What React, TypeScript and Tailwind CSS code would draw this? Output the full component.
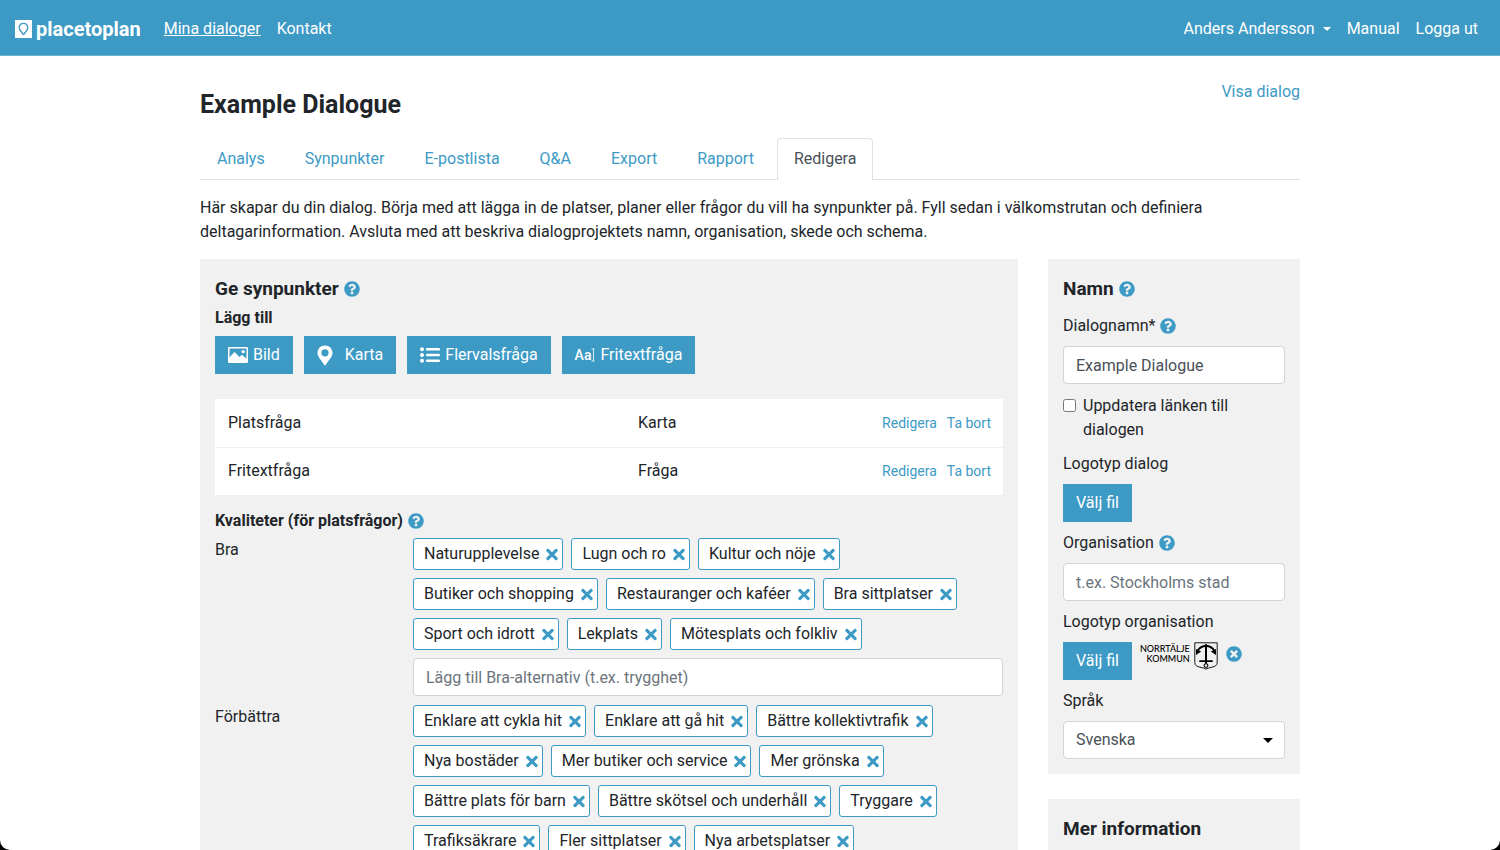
import React from "react";
import { FaQuestionCircle, FaTimes, FaTimesCircle } from "react-icons/fa";

const tabs = [
  "Analys",
  "Synpunkter",
  "E-postlista",
  "Q&A",
  "Export",
  "Rapport",
  "Redigera",
];

const questions = [
  { name: "Platsfråga", type: "Karta" },
  { name: "Fritextfråga", type: "Fråga" },
];

const good = [
  "Naturupplevelse",
  "Lugn och ro",
  "Kultur och nöje",
  "Butiker och shopping",
  "Restauranger och kaféer",
  "Bra sittplatser",
  "Sport och idrott",
  "Lekplats",
  "Mötesplats och folkliv",
];

const improve = [
  "Enklare att cykla hit",
  "Enklare att gå hit",
  "Bättre kollektivtrafik",
  "Nya bostäder",
  "Mer butiker och service",
  "Mer grönska",
  "Bättre plats för barn",
  "Bättre skötsel och underhåll",
  "Tryggare",
  "Trafiksäkrare",
  "Fler sittplatser",
  "Nya arbetsplatser",
];

function ImageIcon() {
  return (
    <svg width="20" height="16" viewBox="0 0 20 16" fill="none">
      <rect x="0.75" y="0.75" width="18.5" height="14.5" rx="0.5" stroke="white" strokeWidth="1.5" />
      <path d="M1 15V11L6.5 5L11.5 10L14 7.800L19 12V15Z" fill="white" />
      <circle cx="15.200" cy="4.600" r="1.700" fill="white" />
    </svg>
  );
}

function PinIcon() {
  return (
    <svg width="16" height="21" viewBox="0 0 16 21">
      <path
        fill="white"
        fillRule="evenodd"
        d="M8 0.500C3.700 0.500 0.500 3.700 0.500 7.800C0.500 12.500 5 15.500 7 19.800Q8 21.200 9 19.800C11 15.500 15.500 12.500 15.500 7.800C15.500 3.700 12.300 0.500 8 0.500ZM8 4.200A3.600 3.600 0 1 1 8 11.400A3.600 3.600 0 1 1 8 4.200Z"
      />
    </svg>
  );
}

function ListIcon() {
  return (
    <svg width="20" height="16" viewBox="0 0 20 16" fill="white">
      <circle cx="2" cy="2.200" r="2" />
      <circle cx="2" cy="8" r="2" />
      <circle cx="2" cy="13.800" r="2" />
      <rect x="6" y="1" width="14" height="2.600" rx="1.200" />
      <rect x="6" y="6.700" width="14" height="2.600" rx="1.200" />
      <rect x="6" y="12.400" width="14" height="2.600" rx="1.200" />
    </svg>
  );
}

function CursorIcon() {
  return (
    <svg width="4" height="14" viewBox="0 0 4 14" fill="none">
      <path d="M0.500 1H3.500M0.500 13H3.500M2.500 1V13" stroke="white" strokeOpacity="0.8" />
    </svg>
  );
}

function Shield() {
  return (
    <svg width="24" height="28" viewBox="0 0 24 28" fill="none" stroke="black">
      <path d="M0.800 0.800H23.200V20.500C23.200 23.500 21 24.500 18 25.200C15 25.900 13 26.300 12 27.300C11 26.300 9 25.900 6 25.200C3 24.500 0.800 23.500 0.800 20.500Z" strokeWidth="0.9" />
      <path d="M3.500 9C5.500 5.500 9 4 12 4C15 4 18.500 5.500 20.500 9" strokeWidth="1.800" />
      <path d="M2 7L2 13L7.200 9.500ZM22 7L22 13L16.800 9.500ZM12 1.800L8.500 5H15.500Z" fill="black" stroke="none" />
      <path d="M12 3.500V21.500" strokeWidth="2" />
      <path d="M6 19.200H18" strokeWidth="1.800" strokeLinecap="round" />
      <circle cx="12" cy="23.600" r="1.900" strokeWidth="1.100" />
    </svg>
  );
}

function Help() {
  return (
    <button type="button" aria-label="Hjälp" className="text-[#3d9ac5]">
      <FaQuestionCircle size={16} />
    </button>
  );
}

function AddButton({ icon, label }: { icon: React.ReactNode; label: string }) {
  return (
    <button type="button" className="flex h-[38px] items-center gap-[5px] bg-[#3d9ac5] px-[13px] text-white">
      {icon}
      <span>{label}</span>
    </button>
  );
}

function TagGroup({
  id,
  label,
  tags,
  placeholder,
}: {
  id: string;
  label: string;
  tags: string[];
  placeholder: string;
}) {
  return (
    <div className="flex">
      <label htmlFor={id} className="w-[198px] shrink-0">
        {label}
      </label>
      <div className="flex flex-1 flex-wrap gap-2">
        {tags.map((tag) => (
          <span
            key={tag}
            className="flex h-8 items-center gap-[7px] rounded-[3px] border border-[#3d9ac5] bg-white pr-1 pl-[10px]"
          >
            {tag}
            <button type="button" aria-label={`Ta bort ${tag}`} className="text-[#3d9ac5]">
              <FaTimes className="h-[17px] w-3" />
            </button>
          </span>
        ))}
        <input
          id={id}
          placeholder={placeholder}
          className="h-[38px] w-full rounded-[4px] border border-[#ced4da] bg-white px-3 placeholder:text-[#6c757d]"
        />
      </div>
    </div>
  );
}

function Header() {
  return (
    <header className="flex h-14 items-center justify-between border-b border-[#6db3d4] bg-[#3d9ac5] pt-[2px] pr-[22px] pl-[15px] text-white">
      <div className="flex items-center">
        <a href="#" className="mr-[23px] flex items-center gap-1 text-[20px] font-bold">
          <svg width="17" height="18" viewBox="0 0 17 18">
            <rect width="17" height="18" fill="white" />
            <path
              d="M8.500 3.300C5.900 3.300 4.200 5.200 4.200 7.600C4.200 10.500 6.800 11.500 7.900 14.200Q8.500 15.100 9.100 14.200C10.200 11.500 12.800 10.500 12.800 7.600C12.800 5.200 11.100 3.300 8.500 3.300Z"
              fill="none"
              stroke="#3d9ac5"
              strokeWidth="1.300"
            />
          </svg>
          placetoplan
        </a>
        <nav className="flex gap-4">
          <a href="#" className="underline">Mina dialoger</a>
          <a href="#">Kontakt</a>
        </nav>
      </div>
      <nav className="flex gap-4">
        <button type="button" className="flex items-center gap-2">
          Anders Andersson
          <svg width="8" height="4" viewBox="0 0 8 4" fill="white">
            <path d="M0 0H8L4 4Z" />
          </svg>
        </button>
        <a href="#">Manual</a>
        <a href="#">Logga ut</a>
      </nav>
    </header>
  );
}

function Editor() {
  return (
    <section className="min-w-0 flex-1 bg-[#f1f1f1] px-[15px] pt-[15px] pb-6">
      <h2 className="flex items-center gap-[5px] text-[19px] leading-[30px] font-bold">
        Ge synpunkter <Help />
      </h2>
      <h3 className="mt-[2px] font-bold">Lägg till</h3>
      <div className="mt-[6px] flex gap-[11px]">
        <AddButton icon={<ImageIcon />} label="Bild" />
        <AddButton icon={<span className="mr-[7px]"><PinIcon /></span>} label="Karta" />
        <AddButton icon={<ListIcon />} label="Flervalsfråga" />
        <AddButton
          icon={
            <span className="flex items-center text-sm font-medium">
              Aa
              <CursorIcon />
            </span>
          }
          label="Fritextfråga"
        />
      </div>
      <table className="mt-[25px] w-full table-fixed bg-white text-left">
        <tbody>
          {questions.map((q) => (
            <tr key={q.name} className="h-12 border-b border-[#f1f1f1] last:border-0">
              <td className="w-[423px] pl-[13px]">{q.name}</td>
              <td>{q.type}</td>
              <td className="pr-3 text-right text-sm text-[#3d9ac5]">
                <a href="#">Redigera</a>
                <a href="#" className="ml-[10px]">Ta bort</a>
              </td>
            </tr>
          ))}
        </tbody>
      </table>
      <h3 className="mt-[14px] mb-[5px] flex items-center gap-[5px] font-bold">
        Kvaliteter (för platsfrågor) <Help />
      </h3>
      <div className="flex flex-col gap-[9px]">
        <TagGroup id="bra" label="Bra" tags={good} placeholder="Lägg till Bra-alternativ (t.ex. trygghet)" />
        <TagGroup id="forbattra" label="Förbättra" tags={improve} placeholder="Lägg till Förbättra-alternativ" />
      </div>
    </section>
  );
}

function Sidebar() {
  return (
    <aside className="flex w-[252px] shrink-0 flex-col gap-[25px]">
      <section className="bg-[#f1f1f1] p-[15px]">
        <h2 className="mb-[10px] flex items-center gap-[5px] text-[19px] leading-[30px] font-bold">
          Namn <Help />
        </h2>
        <div className="mb-2 flex items-center gap-[5px]">
          <label htmlFor="name">Dialognamn*</label>
          <Help />
        </div>
        <input
          id="name"
          defaultValue="Example Dialogue"
          className="h-[38px] w-full rounded-[4px] border border-[#ced4da] bg-white px-3 text-[#495057]"
        />
        <div className="my-[10px] flex items-start gap-[7px]">
          <input id="update" type="checkbox" className="mt-[5px] size-[13px] shrink-0" />
          <label htmlFor="update">Uppdatera länken till dialogen</label>
        </div>
        <div className="flex flex-col gap-[9px]">
          <div>
            <p className="mb-2">Logotyp dialog</p>
            <button type="button" className="h-[38px] bg-[#3d9ac5] px-[13px] text-white">Välj fil</button>
          </div>
          <div>
            <div className="mb-2 flex items-center gap-[5px]">
              <label htmlFor="org">Organisation</label>
              <Help />
            </div>
            <input
              id="org"
              placeholder="t.ex. Stockholms stad"
              className="h-[38px] w-full rounded-[4px] border border-[#ced4da] bg-white px-3 placeholder:text-[#6c757d]"
            />
          </div>
          <div>
            <p className="mb-2">Logotyp organisation</p>
            <div className="flex items-start">
              <button type="button" className="h-[38px] bg-[#3d9ac5] px-[13px] text-white">Välj fil</button>
              <span className="mr-1 ml-2 pt-[2px] text-right font-['Lato'] text-[9px] leading-[10px] font-medium text-black">
                NORRTÄLJE
                <br />
                KOMMUN
              </span>
              <Shield />
              <button type="button" aria-label="Ta bort logotyp" className="mt-1 ml-2 text-[#3d9ac5]">
                <FaTimesCircle size={16} />
              </button>
            </div>
          </div>
          <div>
            <label htmlFor="lang" className="mb-2 block">Språk</label>
            <div className="grid items-center">
              <select
                id="lang"
                className="col-start-1 row-start-1 h-[38px] w-full appearance-none rounded-[4px] border border-[#ced4da] bg-white px-3 text-[#495057]"
              >
                <option>Svenska</option>
              </select>
              <svg
                width="10"
                height="5"
                viewBox="0 0 10 5"
                className="pointer-events-none col-start-1 row-start-1 mr-3 justify-self-end"
              >
                <path d="M0 0H10L5 5Z" />
              </svg>
            </div>
          </div>
        </div>
      </section>
      <section className="bg-[#f1f1f1] p-[15px]">
        <h2 className="text-[19px] leading-[30px] font-bold">Mer information</h2>
      </section>
    </aside>
  );
}

function App() {
  return (
    <div className="h-screen bg-black">
      <div className="h-full overflow-y-auto rounded-b-[10px] bg-white font-['Roboto','Liberation_Sans',sans-serif] text-[16px] leading-6 text-[#212529] [scrollbar-width:none]">
        <Header />
        <main className="mx-auto max-w-[1100px] pb-8">
          <div className="flex items-start justify-between pt-6">
            <h1 className="pt-[7px] text-[25px] leading-9 font-bold">Example Dialogue</h1>
            <a href="#" className="text-[#3d9ac5]">Visa dialog</a>
          </div>
          <nav className="mt-[15px] flex h-[42px] border-b border-[#dee2e6] text-[#3d9ac5]">
            {tabs.map((tab) => (
              <a
                key={tab}
                href="#"
                className={
                  tab === "Redigera"
                    ? "-mb-px rounded-t-[4px] border border-b-0 border-[#dee2e6] bg-white px-4 pt-2 text-[#495057]"
                    : "mr-[6px] border border-transparent px-4 pt-2"
                }
              >
                {tab}
              </a>
            ))}
          </nav>
          <p className="mt-4 mb-[15px]">
            Här skapar du din dialog. Börja med att lägga in de platser, planer eller frågor du vill ha
            synpunkter på. Fyll sedan i välkomstrutan och definiera deltagarinformation. Avsluta med att
            beskriva dialogprojektets namn, organisation, skede och schema.
          </p>
          <div className="flex items-start gap-[30px]">
            <Editor />
            <Sidebar />
          </div>
        </main>
      </div>
    </div>
  );
}

export default App;
